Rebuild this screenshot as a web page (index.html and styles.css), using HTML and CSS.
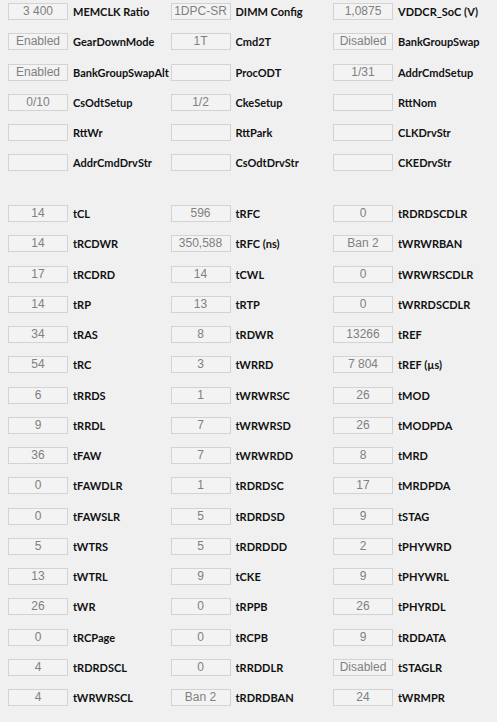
FILE: index.html
```html
<!DOCTYPE html>
<html lang="en">

<head>
  <meta charset="UTF-8">
  <meta name="viewport" content="width=device-width, initial-scale=1.0">
  <title>Timings</title>
  <link rel="stylesheet" href="styles.css">
</head>

<body>
  <main class="timings">
    <section class="group">
      <div class="item"><span class="box">3 400</span><span class="label">MEMCLK Ratio</span></div>
      <div class="item"><span class="box">1DPC-SR</span><span class="label">DIMM Config</span></div>
      <div class="item"><span class="box">1,0875</span><span class="label">VDDCR_SoC (V)</span></div>

      <div class="item"><span class="box">Enabled</span><span class="label">GearDownMode</span></div>
      <div class="item"><span class="box">1T</span><span class="label">Cmd2T</span></div>
      <div class="item"><span class="box">Disabled</span><span class="label">BankGroupSwap</span></div>

      <div class="item"><span class="box">Enabled</span><span class="label">BankGroupSwapAlt</span></div>
      <div class="item"><span class="box"></span><span class="label">ProcODT</span></div>
      <div class="item"><span class="box">1/31</span><span class="label">AddrCmdSetup</span></div>

      <div class="item"><span class="box">0/10</span><span class="label">CsOdtSetup</span></div>
      <div class="item"><span class="box">1/2</span><span class="label">CkeSetup</span></div>
      <div class="item"><span class="box"></span><span class="label">RttNom</span></div>

      <div class="item"><span class="box"></span><span class="label">RttWr</span></div>
      <div class="item"><span class="box"></span><span class="label">RttPark</span></div>
      <div class="item"><span class="box"></span><span class="label">CLKDrvStr</span></div>

      <div class="item"><span class="box"></span><span class="label">AddrCmdDrvStr</span></div>
      <div class="item"><span class="box"></span><span class="label">CsOdtDrvStr</span></div>
      <div class="item"><span class="box"></span><span class="label">CKEDrvStr</span></div>
    </section>

    <section class="group">
      <div class="item"><span class="box">14</span><span class="label">tCL</span></div>
      <div class="item"><span class="box">596</span><span class="label">tRFC</span></div>
      <div class="item"><span class="box">0</span><span class="label">tRDRDSCDLR</span></div>

      <div class="item"><span class="box">14</span><span class="label">tRCDWR</span></div>
      <div class="item"><span class="box">350,588</span><span class="label">tRFC (ns)</span></div>
      <div class="item"><span class="box">Ban 2</span><span class="label">tWRWRBAN</span></div>

      <div class="item"><span class="box">17</span><span class="label">tRCDRD</span></div>
      <div class="item"><span class="box">14</span><span class="label">tCWL</span></div>
      <div class="item"><span class="box">0</span><span class="label">tWRWRSCDLR</span></div>

      <div class="item"><span class="box">14</span><span class="label">tRP</span></div>
      <div class="item"><span class="box">13</span><span class="label">tRTP</span></div>
      <div class="item"><span class="box">0</span><span class="label">tWRRDSCDLR</span></div>

      <div class="item"><span class="box">34</span><span class="label">tRAS</span></div>
      <div class="item"><span class="box">8</span><span class="label">tRDWR</span></div>
      <div class="item"><span class="box">13266</span><span class="label">tREF</span></div>

      <div class="item"><span class="box">54</span><span class="label">tRC</span></div>
      <div class="item"><span class="box">3</span><span class="label">tWRRD</span></div>
      <div class="item"><span class="box">7 804</span><span class="label">tREF (µs)</span></div>

      <div class="item"><span class="box">6</span><span class="label">tRRDS</span></div>
      <div class="item"><span class="box">1</span><span class="label">tWRWRSC</span></div>
      <div class="item"><span class="box">26</span><span class="label">tMOD</span></div>

      <div class="item"><span class="box">9</span><span class="label">tRRDL</span></div>
      <div class="item"><span class="box">7</span><span class="label">tWRWRSD</span></div>
      <div class="item"><span class="box">26</span><span class="label">tMODPDA</span></div>

      <div class="item"><span class="box">36</span><span class="label">tFAW</span></div>
      <div class="item"><span class="box">7</span><span class="label">tWRWRDD</span></div>
      <div class="item"><span class="box">8</span><span class="label">tMRD</span></div>

      <div class="item"><span class="box">0</span><span class="label">tFAWDLR</span></div>
      <div class="item"><span class="box">1</span><span class="label">tRDRDSC</span></div>
      <div class="item"><span class="box">17</span><span class="label">tMRDPDA</span></div>

      <div class="item"><span class="box">0</span><span class="label">tFAWSLR</span></div>
      <div class="item"><span class="box">5</span><span class="label">tRDRDSD</span></div>
      <div class="item"><span class="box">9</span><span class="label">tSTAG</span></div>

      <div class="item"><span class="box">5</span><span class="label">tWTRS</span></div>
      <div class="item"><span class="box">5</span><span class="label">tRDRDDD</span></div>
      <div class="item"><span class="box">2</span><span class="label">tPHYWRD</span></div>

      <div class="item"><span class="box">13</span><span class="label">tWTRL</span></div>
      <div class="item"><span class="box">9</span><span class="label">tCKE</span></div>
      <div class="item"><span class="box">9</span><span class="label">tPHYWRL</span></div>

      <div class="item"><span class="box">26</span><span class="label">tWR</span></div>
      <div class="item"><span class="box">0</span><span class="label">tRPPB</span></div>
      <div class="item"><span class="box">26</span><span class="label">tPHYRDL</span></div>

      <div class="item"><span class="box">0</span><span class="label">tRCPage</span></div>
      <div class="item"><span class="box">0</span><span class="label">tRCPB</span></div>
      <div class="item"><span class="box">9</span><span class="label">tRDDATA</span></div>

      <div class="item"><span class="box">4</span><span class="label">tRDRDSCL</span></div>
      <div class="item"><span class="box">0</span><span class="label">tRRDDLR</span></div>
      <div class="item"><span class="box">Disabled</span><span class="label">tSTAGLR</span></div>

      <div class="item"><span class="box">4</span><span class="label">tWRWRSCL</span></div>
      <div class="item"><span class="box">Ban 2</span><span class="label">tRDRDBAN</span></div>
      <div class="item"><span class="box">24</span><span class="label">tWRMPR</span></div>
    </section>
  </main>
</body>

</html>
```

FILE: styles.css
```css
body {
  margin: 0;
  background: #f0f0f0;
}

.timings {
  padding: 3px 0 0 8px;
}

.group {
  display: grid;
  grid-template-columns: repeat(3, 162.5px);
  grid-auto-rows: 30.25px;
}

.group + .group {
  margin-top: 20.5px;
}

.item {
  display: flex;
  align-items: flex-start;
  min-width: 0;
}

.box {
  flex: none;
  box-sizing: border-box;
  width: 60px;
  height: 17px;
  border: 1px solid #d3d3d3;
  background: #f3f3f3;
  font: 12px/15px "Liberation Sans", Arial, sans-serif;
  color: #808080;
  text-align: center;
}

.label {
  margin-left: 5px;
  white-space: nowrap;
  font: bold 11px/17px Lato, sans-serif;
  color: #111;
}
```
